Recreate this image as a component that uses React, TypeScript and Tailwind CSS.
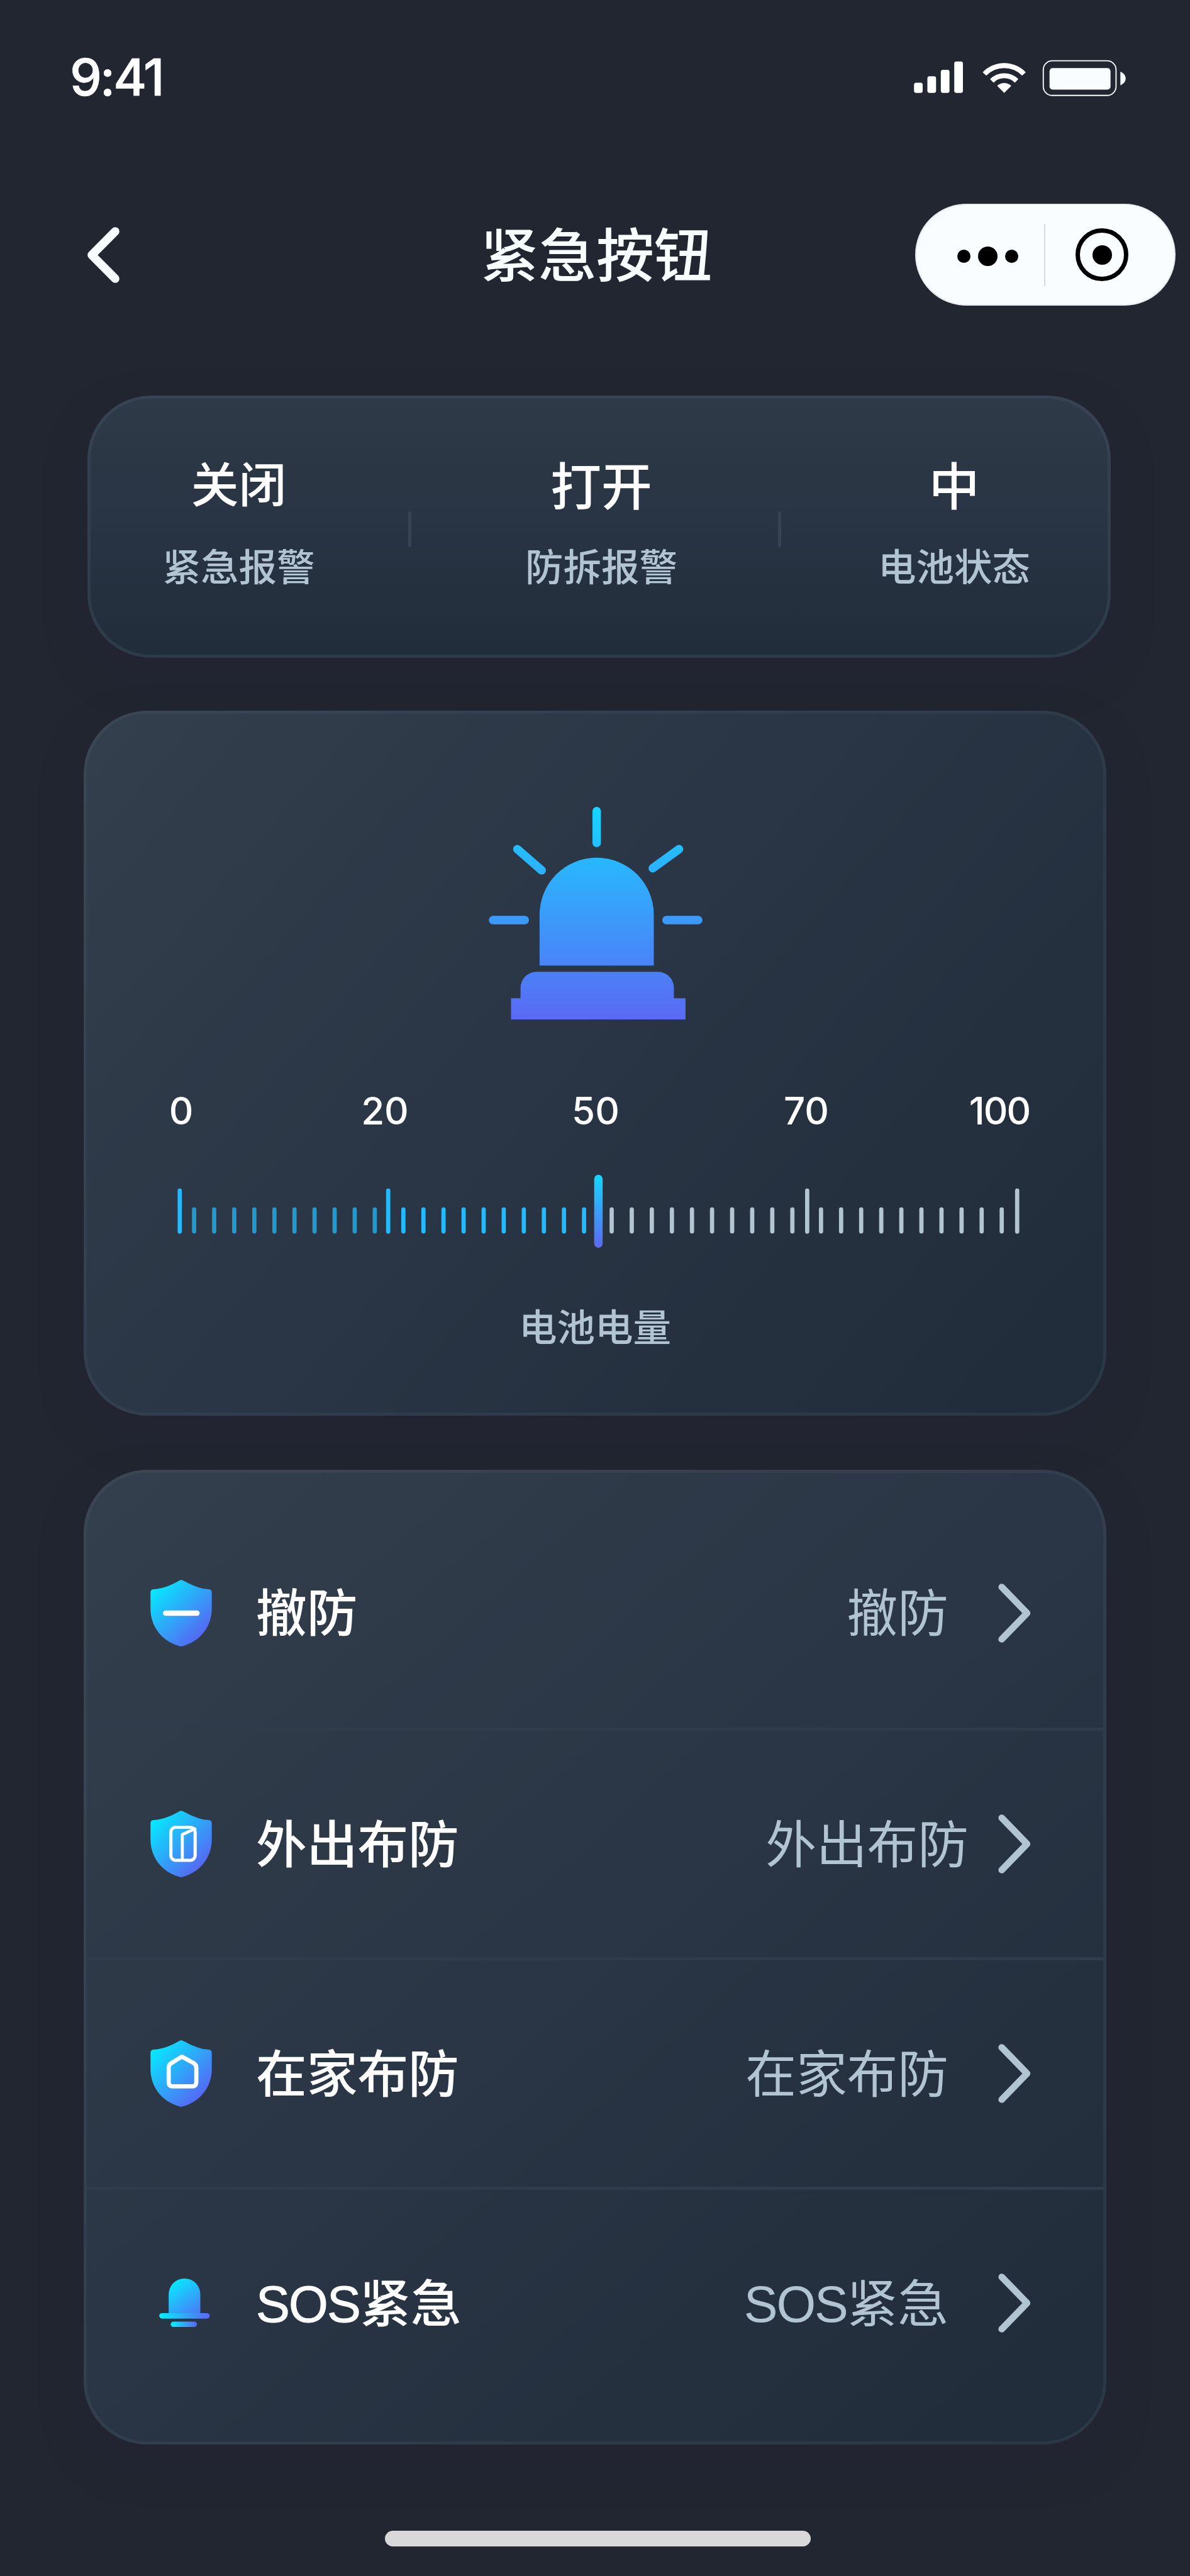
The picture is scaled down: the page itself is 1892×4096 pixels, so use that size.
import type { ReactNode } from 'react';

const MINOR_TICKS = [
  { start: 367.2, color: '#2699cc' },
  { start: 763, color: '#24baff' },
  { start: 1157, color: '#b4c5d2' },
  { start: 1553, color: '#b4c5d2' },
];

const MAJOR_TICKS = [
  { x: 340, color: '#24baff' },
  { x: 734.3, color: '#24baff' },
  { x: 1526.8, color: '#b4c5d2' },
  { x: 1924, color: '#b4c5d2' },
];

function StatusBar() {
  return (
    <header className="flex h-[247px] items-center pl-[111px]">
      <div className="w-[160px] font-['Inter',sans-serif] text-[81px] leading-none font-medium tracking-[-3.2px] text-white [-webkit-text-stroke:0.6px_#fff]">
        9:41
      </div>
      <svg className="ml-[1182px] h-[58px] w-[338px]" viewBox="1727.5 112.5 402 69" fill="#fff">
        <rect x="1727.7" y="156" width="16.4" height="19.2" rx="4" />
        <rect x="1753" y="143.8" width="16.4" height="31.4" rx="4" />
        <rect x="1778.4" y="131.6" width="16.4" height="43.6" rx="4" />
        <rect x="1803.8" y="115.9" width="16.4" height="59.3" rx="4" />
        <path d="M1857.6 136.2A56.2 56.2 0 0 1 1939 136.2L1932.2 142.6A47 47 0 0 0 1864.4 142.6Z" />
        <path d="M1871.5 149.2A37.5 37.5 0 0 1 1925.1 149.2L1918.4 155.8A28 28 0 0 0 1878.2 155.8Z" />
        <path d="M1885 162A19 19 0 0 1 1911.6 162L1898.3 175.2Z" />
        <rect x="1972.2" y="114.4" width="137.6" height="65.6" rx="17" fill="none" stroke="#f9fdff" strokeWidth="2.2" />
        <rect x="1984" y="128.2" width="115.4" height="40.8" rx="6" fill="#f9fdff" />
        <path d="M2118 135C2124 137.5 2128 142 2128 148S2124 158.5 2118 161Z" fill="#f9fdff" />
      </svg>
    </header>
  );
}

function NavBar() {
  return (
    <nav className="flex h-[316px] items-center pl-[139px]">
      <svg className="h-[89px] w-[51px]" viewBox="0 0 60.6 105.8" fill="none">
        <path d="M52.4 8.2L8.2 52.9L52.4 97.6" stroke="#f9fdff" strokeWidth="16" strokeLinecap="round" strokeLinejoin="round" />
      </svg>
      <h1 className="ml-[574px] w-[368px] pt-[6px] text-[92px] leading-none font-medium whitespace-nowrap text-[#f9fdff]">
        紧急按钮
      </h1>
      <div className="ml-[323px] flex h-[162px] w-[414px] items-center rounded-full border-2 border-[#e8ebee] bg-[#f9fdff]">
        <div className="ml-[65px] flex items-center gap-[12px] pt-[5px]">
          <span className="size-[21px] rounded-full bg-black" />
          <span className="size-[31px] rounded-full bg-black" />
          <span className="size-[21px] rounded-full bg-black" />
        </div>
        <span className="ml-[41px] h-[99px] w-[2px] bg-[#d5dadd]" />
        <span className="ml-[48px] flex size-[84px] items-center justify-center rounded-full border-[7px] border-black">
          <span className="size-[31px] rounded-full bg-black" />
        </span>
      </div>
    </nav>
  );
}

function StatLabel({ children }: { children: string }) {
  return <div className="text-[60.5px] leading-[60px] font-medium text-[#b2c3d1]">{children}</div>;
}

function StatCard() {
  return (
    <section className="mt-[66px] ml-[139px] flex h-[417px] w-[1627px] items-start rounded-[101px] border-[5px] border-transparent shadow-[0_30px_60px_rgba(36,34,52,0.55)] [background:linear-gradient(180deg,#2e3a47,#293444_45%,#222d3b)_padding-box,linear-gradient(180deg,#374253,#2d3a48)_border-box]">
      <div className="flex w-[471px] flex-col items-center gap-[60px] pt-[99px]">
        <div className="text-[75.7px] leading-[80px] font-medium text-white">关闭</div>
        <StatLabel>紧急报警</StatLabel>
      </div>
      <span className="mt-[179px] ml-[34px] h-[57px] w-[5px] rounded-full bg-[#374253]" />
      <div className="ml-[22px] flex w-[560px] flex-col items-center gap-[58px] pt-[101px]">
        <div className="text-[80.7px] leading-[80px] font-medium text-white">打开</div>
        <StatLabel>防拆报警</StatLabel>
      </div>
      <span className="mt-[179px] ml-[1px] h-[57px] w-[5px] rounded-full bg-[#374253]" />
      <div className="ml-[55px] flex w-[440px] flex-col items-center gap-[58px] pt-[101px]">
        <div className="text-[80.7px] leading-[80px] font-medium text-white">中</div>
        <StatLabel>电池状态</StatLabel>
      </div>
    </section>
  );
}

function SirenIcon() {
  return (
    <svg className="mt-[148px] ml-[639px] h-[338px] w-[340px]" viewBox="132 138 1212 1206" fill="none">
      <defs>
        <linearGradient id="siren" gradientUnits="userSpaceOnUse" x1="0" y1="138" x2="0" y2="1344">
          <stop stopColor="#14d7ff" />
          <stop offset="0.2" stopColor="#25bcfe" />
          <stop offset="1" stopColor="#5b69f4" />
        </linearGradient>
      </defs>
      <g stroke="url(#siren)" strokeWidth="48" strokeLinecap="round">
        <path d="M744 162L744.01 342" />
        <path d="M294 378L432 498" />
        <path d="M1211 378L1062 486" />
        <path d="M156 780L336 780.01" />
        <path d="M1140 780L1320 780.01" />
      </g>
      <g fill="url(#siren)">
        <path d="M420 1038V750A324 324 0 0 1 1068 750V1038Z" />
        <path d="M258 1344V1224H312V1164A90 90 0 0 1 402 1074H1092A90 90 0 0 1 1182 1164V1224H1248V1344Z" />
      </g>
    </svg>
  );
}

function Ruler() {
  return (
    <svg className="mt-[72px] ml-[144px] h-[116px] w-[1339px]" viewBox="336 2222 1592 138">
      <defs>
        <linearGradient id="needle" x1="0" y1="0" x2="0" y2="1">
          <stop stopColor="#14d7ff" />
          <stop offset="1" stopColor="#5b69f4" />
        </linearGradient>
      </defs>
      {MINOR_TICKS.map((group) =>
        Array.from({ length: 10 }, (_, i) => (
          <rect key={`${group.start}-${i}`} x={group.start + i * 37.97 - 4} y="2283.5" width="8" height="49.5" rx="4" fill={group.color} />
        )),
      )}
      {MAJOR_TICKS.map((tick) => (
        <rect key={tick.x} x={tick.x - 4} y="2248" width="8" height="85.5" rx="4" fill={tick.color} />
      ))}
      <rect x="1123.9" y="2222" width="16" height="138" rx="8" fill="url(#needle)" />
    </svg>
  );
}

function BatteryCard() {
  return (
    <section className="mt-[84px] ml-[133px] flex h-[1121px] w-[1626px] flex-col items-start rounded-[101px] border-[5px] border-transparent shadow-[0_30px_60px_rgba(36,34,52,0.55)] [background:linear-gradient(131deg,#333f4c,#2a3545_45%,#202c39)_padding-box,linear-gradient(131deg,#3b4655,#303c4b_50%,#2a3744)_border-box]">
      <SirenIcon />
      <div className="mt-[115px] ml-[95px] flex text-center font-['Inter',sans-serif] text-[60px] leading-[60px] font-medium text-white">
        <span className="w-[110px]">0</span>
        <span className="ml-[214px] w-[110px]">20</span>
        <span className="ml-[225px] w-[110px]">50</span>
        <span className="ml-[225px] w-[110px]">70</span>
        <span className="ml-[197px] w-[110px] tracking-[-2px]">100</span>
      </div>
      <Ruler />
      <div className="mt-[98px] w-full text-center text-[60.5px] leading-[60px] font-medium text-[#b2c3d1]">电池电量</div>
    </section>
  );
}

function Shield({ children }: { children: ReactNode }) {
  return (
    <svg className="h-[106px] w-[98px] shrink-0" viewBox="0 0 182 198" fill="none">
      <defs>
        <linearGradient id="shield" gradientUnits="userSpaceOnUse" x1="14" y1="18" x2="158" y2="158">
          <stop stopColor="#04ebff" />
          <stop offset="1" stopColor="#5569f4" />
        </linearGradient>
      </defs>
      <path
        d="M88 1Q91 -0.5 94 1C120 14 148 28 173 28Q182 29 182 38V86C182 140 146 184 95 197Q91 198.500 87 197C36 184 0 140 0 86V38Q0 29 9 28C36 27 66 14 88 1Z"
        fill="url(#shield)"
      />
      <g stroke="#fff" strokeLinecap="round" strokeLinejoin="round">
        {children}
      </g>
    </svg>
  );
}

function AlarmIcon() {
  return (
    <svg className="h-[106px] w-[98px] shrink-0" viewBox="241 959 182 198">
      <defs>
        <linearGradient id="dome" gradientUnits="userSpaceOnUse" x1="305" y1="990" x2="385" y2="1100">
          <stop stopColor="#04edff" />
          <stop offset="1" stopColor="#5072f5" />
        </linearGradient>
        <linearGradient id="bar" x1="0" y1="0" x2="1" y2="0">
          <stop stopColor="#04f0ff" />
          <stop offset="1" stopColor="#5b66f3" />
        </linearGradient>
      </defs>
      <path d="M295 1090V1032A47 47 0 0 1 389 1032V1090Z" fill="url(#dome)" />
      <rect x="267" y="1088" width="150" height="16" rx="8" fill="url(#bar)" />
      <rect x="301" y="1113" width="78" height="16" rx="8" fill="url(#bar)" />
    </svg>
  );
}

const rows = [
  {
    latin: '',
    label: '撤防',
    className: 'h-[405px] pt-[40px]',
    gap: 'mr-[79px]',
    icon: (
      <Shield>
        <path d="M45 99H138" strokeWidth="16" />
      </Shield>
    ),
  },
  {
    latin: '',
    label: '外出布防',
    className: 'h-[365px] border-t-[5px]',
    gap: 'mr-[47px]',
    icon: (
      <Shield>
        <rect x="60.500" y="49.500" width="72" height="98" rx="14" strokeWidth="9.500" />
        <path d="M94.500 147V71L132 54" strokeWidth="9" />
      </Shield>
    ),
  },
  {
    latin: '',
    label: '在家布防',
    className: 'h-[365px] border-t-[5px]',
    gap: 'mr-[79px]',
    icon: (
      <Shield>
        <path d="M93.500 49L128 68Q136 73 136 81V125Q136 137 124 137H66Q54 137 54 125V81Q54 73 62 68Z" strokeWidth="12.500" />
      </Shield>
    ),
  },
  {
    latin: 'SOS',
    label: '紧急',
    className: 'h-[365px] border-t-[5px]',
    gap: 'mr-[79px]',
    icon: <AlarmIcon />,
  },
];

function ModeList() {
  return (
    <section className="mt-[86px] ml-[133px] h-[1550px] w-[1626px] rounded-[101px] border-[5px] border-transparent shadow-[0_30px_60px_rgba(36,34,52,0.55)] [background:linear-gradient(139deg,#333f4c,#2a3545_48%,#202c39)_padding-box,linear-gradient(139deg,#3b4655,#323e4d_50%,#2a3744)_border-box]">
      {rows.map((row) => (
        <div key={row.label} className={`flex items-center border-[#303c4b] pr-[115px] pl-[101px] ${row.className}`}>
          {row.icon}
          <span className="ml-[70px] pt-[4px] text-[80.7px] leading-none font-medium text-white">
            <span className="tracking-[-1.8px] [-webkit-text-stroke:1px_#fff]">{row.latin}</span>
            {row.label}
          </span>
          <span className={`ml-auto pt-[4px] text-[80.7px] leading-none text-[#b2c3d1] ${row.gap}`}>
            <span className="tracking-[-2.2px]">{row.latin}</span>
            {row.label}
          </span>
          <svg className="h-[94px] w-[52px] shrink-0" viewBox="0 0 61 111" fill="none">
            <path d="M6.500 6.500L54 55.500L6.500 104.500" stroke="#b2c3d1" strokeWidth="12.500" strokeLinecap="round" strokeLinejoin="round" />
          </svg>
        </div>
      ))}
    </section>
  );
}

export default function App() {
  return (
    <main className="h-[4096px] w-[1892px] overflow-hidden bg-[#222631] font-['Liberation_Sans','Noto_Sans_CJK_SC',sans-serif]">
      <StatusBar />
      <NavBar />
      <StatCard />
      <BatteryCard />
      <ModeList />
      <div className="mt-[137px] ml-[612px] h-[25px] w-[677px] rounded-full bg-[#d9d9d9]" />
    </main>
  );
}
